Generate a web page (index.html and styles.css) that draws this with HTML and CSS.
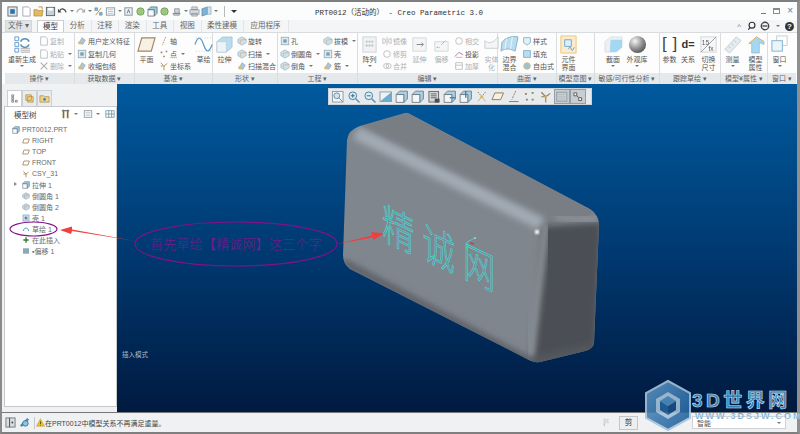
FILE: index.html
```html
<!DOCTYPE html>
<html lang="zh-CN">
<head>
    <meta charset="UTF-8">
    <title>PRT0012 (活动的) - Creo Parametric 3.0</title>
    <link rel="stylesheet" href="styles.css">
</head>
<body>
<svg class="defs" width="0" height="0">
    <symbol id="plane" viewBox="0 0 20 20"><path d="M5 3h14l-4 14H1z" fill="#f4efe0" stroke="#8a6a3a" stroke-width="1.2"/></symbol>
    <symbol id="csys" viewBox="0 0 12 12"><path d="M6 6 2 2M6 6l4-3M6 6v5M2 6h3" stroke="#8a6a3a" fill="none"/><circle cx="6" cy="6" r="1.2" fill="#c9a040"/></symbol>
    <symbol id="block" viewBox="0 0 20 20"><path d="M2 7 8 2h10v11l-6 5H2z" fill="#a8d4ee" stroke="#7aa0b8" stroke-width=".6"/><path d="M2 7h10v11H2z" fill="#e8f2f8" stroke="#9db4c2" stroke-width=".6"/></symbol>
    <symbol id="round" viewBox="0 0 12 12"><path d="M1 4 6 1l5 3v4l-5 3-5-3z" fill="#bcdcec" stroke="#6f98ad" stroke-width=".7"/><path d="M4 9V5l7-1" stroke="#e8864a" fill="none" stroke-width=".8"/></symbol>
    <symbol id="shell" viewBox="0 0 12 12"><rect x="1.5" y="1.5" width="9" height="9" fill="#d5e6ef" stroke="#7c98a8"/><rect x="4" y="4" width="4" height="4" fill="#5d86a3"/></symbol>
    <symbol id="doc" viewBox="0 0 12 12"><path d="M2 1h6l2 2v8H2z" fill="#fff" stroke="#8d949a" stroke-width=".8"/></symbol>
    <symbol id="gear" viewBox="0 0 12 12"><path d="M2 9 6 2l4 3-3 5z" fill="#8fbcd6" stroke="#5c7f96" stroke-width=".6"/><circle cx="3.5" cy="8" r="2" fill="#e3a63f"/></symbol>
    <symbol id="tool" viewBox="0 0 12 12"><rect x="1.5" y="2" width="9" height="8" fill="none" stroke="#8c9aa3"/><path d="M3 6h6M3 4h6M3 8h6" stroke="#aab4ba" stroke-width=".8"/></symbol>
    <symbol id="cube" viewBox="0 0 12 12"><path d="M1 4h7v7H1z" fill="#f6fafc" stroke="#5d6a72" stroke-width=".8"/><path d="M1 4l3-3h7v7l-3 3V4z" fill="#9ccbe6" stroke="#5d6a72" stroke-width=".8"/></symbol>
</svg>

<div class="app">
    <div class="titlebar">
        <div class="quick">
            <svg class="qa qa-first" viewBox="0 0 12 12"><rect x="1" y="1" width="10" height="10" fill="#dfe6ea" stroke="#5f6f7a"/><rect x="3.5" y="3.5" width="5" height="5" fill="#2f6fb0"/></svg>
            <svg class="qa" viewBox="0 0 12 12"><use href="#doc"/></svg>
            <svg class="qa" viewBox="0 0 12 12"><path d="M1 4h4l1 1h5l-1 6H1z" fill="#e6b85c" stroke="#9a7a30" stroke-width=".6"/><path d="M6 1h4v3" stroke="#d08a2a" fill="none"/></svg>
            <svg class="qa" viewBox="0 0 12 12"><rect x="1.5" y="1.5" width="9" height="9" fill="#c9d0d6" stroke="#56626b"/><rect x="3.5" y="2" width="5" height="3" fill="#fff"/></svg>
            <svg class="qa" viewBox="0 0 12 12"><path d="M3 5c2-3 6-2 7 2" stroke="#444" fill="none" stroke-width="1.3"/><path d="M1 3v4h4z" fill="#444"/></svg>
            <span class="caret"></span>
            <svg class="qa" viewBox="0 0 12 12"><path d="M9 5C7 2 3 3 2 7" stroke="#aaa" fill="none" stroke-width="1.3"/><path d="M11 3v4H7z" fill="#aaa"/></svg>
            <span class="caret"></span>
            <svg class="qa" viewBox="0 0 12 12"><path d="M2 2h3v3H2zM7 7h3v3H7z" fill="#7fb2d6" stroke="#4d7a9a" stroke-width=".5"/><path d="M9 2 3 10" stroke="#c8962f"/></svg>
            <svg class="qa" viewBox="0 0 12 12"><use href="#tool"/></svg>
            <span class="caret"></span>
            <svg class="qa" viewBox="0 0 12 12"><rect x="2" y="2" width="8" height="8" fill="#eef3f6" stroke="#7e8c95"/><path d="M4.5 8 6 4l1.500 4" stroke="#39414a" fill="none" stroke-width=".7"/></svg>
            <svg class="qa" viewBox="0 0 12 12"><circle cx="6" cy="6" r="4" fill="#9dc77f" stroke="#7aa05f"/></svg>
            <svg class="qa" viewBox="0 0 12 12"><use href="#cube"/></svg>
            <svg class="qa" viewBox="0 0 12 12"><circle cx="6" cy="6" r="4" fill="#9dc77f" stroke="#7aa05f"/></svg>
            <svg class="qa" viewBox="0 0 12 12"><path d="M2 8h8l-1 2H3zM4 3h5v5H4z" fill="#cfd6da" stroke="#6f7a82" stroke-width=".7"/></svg>
            <span class="caret"></span>
            <svg class="qa" viewBox="0 0 12 12"><path d="M3 1h6v3H3zM1 4h10v5H1zM3 8h6v3H3z" fill="#d6dbdf" stroke="#6f7a82" stroke-width=".6"/></svg>
            <svg class="qa" viewBox="0 0 12 12"><path d="M1 3l6-2v8l-6 2z" fill="#7fb2d6" stroke="#4d7a9a" stroke-width=".6"/><path d="M7 1h4v8H7z" fill="#cfe3ef" stroke="#7d97a8" stroke-width=".6"/></svg>
            <span class="caret"></span>
            <span class="qa-sep"></span>
            <span class="caret caret-dark"></span>
        </div>
        <div class="title">PRT0012（活动的） - Creo Parametric 3.0</div>
        <div class="winbtns">
            <span class="winmin"></span>
            <span class="winmax"></span>
            <span class="winclose">×</span>
        </div>
    </div>

    <div class="tabs">
        <div class="tab tab-file">文件 ▾</div>
        <div class="tab tab-active">模型</div>
        <div class="tab">分析</div>
        <div class="tab">注释</div>
        <div class="tab">渲染</div>
        <div class="tab">工具</div>
        <div class="tab">视图</div>
        <div class="tab">柔性建模</div>
        <div class="tab tab-end">应用程序</div>
        <div class="helpers">
            <span class="chev">^</span>
            <svg class="hicon" viewBox="0 0 12 12"><circle cx="6" cy="5" r="3.500" fill="none" stroke="#333" stroke-width="1.400"/><path d="M3.500 8 1.500 10.500" stroke="#333" stroke-width="1.400"/></svg>
            <svg class="hicon" viewBox="0 0 12 12"><circle cx="6" cy="6" r="4.500" fill="none" stroke="#444" stroke-width="1.600"/><path d="M3 6h6" stroke="#444" stroke-width="1.600"/></svg>
            <span class="caret"></span>
            <span class="helpmark">?</span>
        </div>
    </div>

    <div class="ribbon">
        <div class="group g-ops">
            <div class="g-body">
                <div class="big big-regen">
                    <svg class="bigicon" viewBox="0 0 20 20"><path d="M2 2h4v4H2zM2 8h4v4H2zM2 14h4v4H2z" fill="#fff" stroke="#3c86c6"/><path d="M8 7c2-4 7-4 9 0M17 10c-2 4-7 4-9 0" stroke="#2c70aa" fill="none" stroke-width="1.500"/><path d="M8 16h10M8 18h10M8 14h10" stroke="#666" stroke-width=".7"/></svg>
                    <span>重新生成</span>
                    <span class="caret"></span>
                </div>
                <div class="col dim">
                    <div class="row"><svg viewBox="0 0 12 12"><use href="#doc"/></svg>复制</div>
                    <div class="row"><svg viewBox="0 0 12 12"><use href="#doc"/></svg>粘贴<span class="caret"></span></div>
                    <div class="row"><svg viewBox="0 0 12 12"><path d="M2 2l8 8M10 2l-8 8" stroke="#999" stroke-width="1.300"/></svg>删除<span class="caret"></span></div>
                </div>
            </div>
            <div class="g-label">操作 ▾</div>
        </div>

        <div class="group g-get">
            <div class="g-body">
                <div class="col">
                    <div class="row"><svg viewBox="0 0 12 12"><use href="#gear"/></svg>用户定义特征</div>
                    <div class="row"><svg viewBox="0 0 12 12"><use href="#shell"/></svg>复制几何</div>
                    <div class="row"><svg viewBox="0 0 12 12"><use href="#gear"/></svg>收缩包络</div>
                </div>
            </div>
            <div class="g-label">获取数据 ▾</div>
        </div>

        <div class="group g-datum">
            <div class="g-body">
                <div class="big"><svg class="bigicon" viewBox="0 0 20 20"><use href="#plane"/></svg><span>平面</span></div>
                <div class="col">
                    <div class="row"><svg viewBox="0 0 12 12"><path d="M8 1 4 11" stroke="#8a6a3a" stroke-dasharray="2 1.200"/></svg>轴</div>
                    <div class="row"><svg viewBox="0 0 12 12"><path d="M2 3h2v2H2zM8 2h2v2H8zM5 8h2v2H5z" fill="#8a6a3a"/></svg>点<span class="caret"></span></div>
                    <div class="row"><svg viewBox="0 0 12 12"><use href="#csys"/></svg>坐标系</div>
                </div>
                <div class="big"><svg class="bigicon" viewBox="0 0 20 20"><path d="M1 10c3-9 6-9 9 0s6 9 9 0" stroke="#2f7fc0" fill="none" stroke-width="1.300"/><path d="M2 3h16M2 17h16" stroke="#b9c4ca" stroke-dasharray="1 2"/></svg><span>草绘</span></div>
            </div>
            <div class="g-label">基准 ▾</div>
        </div>

        <div class="group g-shape">
            <div class="g-body">
                <div class="big"><svg class="bigicon" viewBox="0 0 20 20"><use href="#block"/></svg><span>拉伸</span></div>
                <div class="col">
                    <div class="row"><svg viewBox="0 0 12 12"><use href="#round"/></svg>旋转</div>
                    <div class="row"><svg viewBox="0 0 12 12"><use href="#round"/></svg>扫描<span class="caret"></span></div>
                    <div class="row"><svg viewBox="0 0 12 12"><use href="#gear"/></svg>扫描混合</div>
                </div>
            </div>
            <div class="g-label">形状 ▾</div>
        </div>

        <div class="group g-eng">
            <div class="g-body">
                <div class="col">
                    <div class="row"><svg viewBox="0 0 12 12"><use href="#shell"/></svg>孔</div>
                    <div class="row"><svg viewBox="0 0 12 12"><use href="#round"/></svg>倒圆角<span class="caret"></span></div>
                    <div class="row"><svg viewBox="0 0 12 12"><use href="#round"/></svg>倒角<span class="caret"></span></div>
                </div>
                <div class="col">
                    <div class="row"><svg viewBox="0 0 12 12"><use href="#round"/></svg>拔模<span class="caret"></span></div>
                    <div class="row"><svg viewBox="0 0 12 12"><use href="#shell"/></svg>壳</div>
                    <div class="row"><svg viewBox="0 0 12 12"><use href="#gear"/></svg>筋<span class="caret"></span></div>
                </div>
            </div>
            <div class="g-label">工程 ▾</div>
        </div>

        <div class="group g-edit">
            <div class="g-body">
                <div class="big">
                    <svg class="bigicon" viewBox="0 0 20 20"><rect x="3" y="2" width="14" height="16" fill="#eef0f1" stroke="#c4cacd"/><path d="M6 6h2v2H6zM9 6h2v2H9zM12 6h2v2h-2zM6 10h2v2H6zM9 10h2v2H9zM12 10h2v2h-2z" fill="#aab2b7"/></svg>
                    <span>阵列</span><span class="caret"></span>
                </div>
                <div class="col dim">
                    <div class="row"><svg viewBox="0 0 12 12"><path d="M6 1v10M1 3l3 1v4l-3 1zM11 3 8 4v4l3 1z" fill="none" stroke="#aaa"/></svg>镜像</div>
                    <div class="row"><svg viewBox="0 0 12 12"><circle cx="6" cy="6" r="4" fill="none" stroke="#aaa"/></svg>修剪</div>
                    <div class="row"><svg viewBox="0 0 12 12"><circle cx="5" cy="6" r="3" fill="none" stroke="#aaa"/><circle cx="8" cy="6" r="3" fill="none" stroke="#aaa"/></svg>合并</div>
                </div>
                <div class="big dim">
                    <svg class="bigicon" viewBox="0 0 20 20"><path d="M3 3h14v14H3z" fill="#f2f4f5" stroke="#c9ced1"/><path d="M7 10h7m-2-2 2 2-2 2" stroke="#666" fill="none"/></svg>
                    <span>延伸</span>
                </div>
                <div class="big dim">
                    <svg class="bigicon" viewBox="0 0 20 20"><path d="M3 7h14v10H3z" fill="#f2f4f5" stroke="#c9ced1"/><path d="M5 13h3m2-3 4-4" stroke="#777" stroke-dasharray="1.500 1"/></svg>
                    <span>偏移</span>
                </div>
                <div class="col">
                    <div class="row dim"><svg viewBox="0 0 12 12"><circle cx="6" cy="6" r="4" fill="none" stroke="#aaa"/></svg>相交</div>
                    <div class="row"><svg viewBox="0 0 12 12"><path d="M1 9 6 4l5 3" fill="none" stroke="#8b3f9e"/><path d="M2 10h8" stroke="#d2a12e"/></svg>投影</div>
                    <div class="row dim"><svg viewBox="0 0 12 12"><path d="M2 2h8v8H2zM2 5h8" fill="none" stroke="#aaa"/></svg>加厚</div>
                </div>
                <div class="big dim">
                    <svg class="bigicon" viewBox="0 0 20 20"><path d="M3 6c5 4 9 2 14-4v12H3z" fill="#f2f4f5" stroke="#bcc3c7"/></svg>
                    <span>实体<br>化</span>
                </div>
            </div>
            <div class="g-label">编辑 ▾</div>
        </div>

        <div class="group g-surf">
            <div class="g-body">
                <div class="big">
                    <svg class="bigicon" viewBox="0 0 20 20"><path d="M2 8C6 2 13 1 19 2l-3 15C10 14 5 14 1 17z" fill="#a9d5ee" stroke="#6d9cb8"/><path d="M7 4 5 15M13 2l-2 13" stroke="#eaf5fb"/></svg>
                    <span>边界<br>混合</span>
                </div>
                <div class="col">
                    <div class="row"><svg viewBox="0 0 12 12"><path d="M2 2h8v6L6 11 2 8z" fill="#dceef8" stroke="#5d96b8"/></svg>样式</div>
                    <div class="row"><svg viewBox="0 0 12 12"><rect x="2" y="2" width="8" height="8" fill="#a9d5ee" stroke="#5d96b8"/></svg>填充</div>
                    <div class="row"><svg viewBox="0 0 12 12"><circle cx="6" cy="6" r="4" fill="#7fb2d6" stroke="#e3a63f"/></svg>自由式</div>
                </div>
            </div>
            <div class="g-label">曲面 ▾</div>
        </div>

        <div class="group g-intent">
            <div class="g-body">
                <div class="big">
                    <svg class="bigicon" viewBox="0 0 20 20"><path d="M2 1h16v18H2z" fill="#fbe9c4" stroke="#e5b65a"/><path d="M6 5h7v7H6z" fill="#d7ecf8" stroke="#4d94c4"/><path d="M10 15c1-3 2-3 3 0s2 0 3-2" stroke="#2f7fc0" fill="none"/></svg>
                    <span>元件<br>界面</span>
                </div>
            </div>
            <div class="g-label">模型意图 ▾</div>
        </div>

        <div class="group g-sens">
            <div class="g-body">
                <div class="big big-wide">
                    <svg class="bigicon" viewBox="0 0 20 20"><path d="M1 7 7 2h12v11l-6 5H1z" fill="#e9eef1" stroke="#bcc8cf" stroke-width=".6"/><path d="M7 5h12v8l-6 5H6z" fill="#8fd0f0"/></svg>
                    <span>截面</span><span class="caret"></span>
                </div>
                <div class="big big-wide">
                    <svg class="bigicon" viewBox="0 0 20 20"><defs><radialGradient id="ball" cx=".35" cy=".3" r=".8"><stop offset="0" stop-color="#f4f4f4"/><stop offset=".6" stop-color="#6d6d6d"/><stop offset="1" stop-color="#222"/></radialGradient></defs><circle cx="10" cy="10" r="9" fill="url(#ball)"/></svg>
                    <span>外观库</span><span class="caret"></span>
                </div>
            </div>
            <div class="g-label">敏感/可行性分析 ▾</div>
        </div>

        <div class="group g-trace">
            <div class="g-body">
                <div class="big"><div class="brackets">[ ]</div><span>参数</span></div>
                <div class="big"><div class="dequals">d=</div><span>关系</span></div>
                <div class="big">
                    <svg class="bigicon" viewBox="0 0 20 20"><rect x="2" y="2" width="16" height="16" fill="#f4f6f7" stroke="#c6ccd0"/><text x="3" y="10" class="mini">15</text><text x="10" y="17" class="mini">fx</text><path d="M2 18 18 2" stroke="#555" stroke-width=".7"/></svg>
                    <span>切换<br>尺寸</span>
                </div>
            </div>
            <div class="g-label">跟踪草绘 ▾</div>
        </div>

        <div class="group g-props">
            <div class="g-body">
                <div class="big">
                    <svg class="bigicon" viewBox="0 0 20 20"><path d="M2 15 14 2l5 4L7 19z" fill="#dfe8ee" stroke="#b7c3ca"/><path d="M6 12l2 2M9 9l2 2M12 6l2 2" stroke="#9fadb6"/></svg>
                    <span>测量</span><span class="caret"></span>
                </div>
                <div class="big">
                    <svg class="bigicon" viewBox="0 0 20 20"><path d="M3 9 11 2l8 5v3l-5-2v11H6V9z" fill="#8fd0f0" stroke="#5e90ad" stroke-width=".6"/><path d="M3 9l8-7 8 5" stroke="#e3a63f" fill="none"/></svg>
                    <span>模型<br>属性</span>
                </div>
            </div>
            <div class="g-label">模型¥属性 ▾</div>
        </div>

        <div class="group g-win">
            <div class="g-body">
                <div class="big">
                    <svg class="bigicon" viewBox="0 0 20 20"><rect x="7" y="1" width="11" height="10" fill="#fff" stroke="#b9c3c9"/><rect x="2" y="6" width="11" height="11" fill="#eaf3f8" stroke="#5e9ec4"/></svg>
                    <span>窗口</span><span class="caret"></span>
                </div>
            </div>
            <div class="g-label">窗口 ▾</div>
        </div>
    </div>

    <div class="main">
        <div class="sidebar">
            <div class="side-tabs">
                <div class="side-tab side-tab-on"><svg viewBox="0 0 12 12"><path d="M3 2h2v2H3zM3 5h2v2H3zM3 8h2v2H3zM7 8h2v2H7z" fill="none" stroke="#555" stroke-width=".7"/></svg></div>
                <div class="side-tab"><svg viewBox="0 0 12 12"><path d="M2 2h6v6H2zM4 4h6v6H4z" fill="#f0d28a" stroke="#a8843a" stroke-width=".7"/></svg></div>
                <div class="side-tab"><svg viewBox="0 0 12 12"><path d="M1 3h4l1 1h5v6H1z" fill="#f0d28a" stroke="#a8843a" stroke-width=".7"/><circle cx="6" cy="7" r="1.500" fill="#3f86b8"/></svg></div>
            </div>
            <div class="tree-box">
                <div class="tree-head">
                    <span class="tree-title">模型树</span>
                    <svg viewBox="0 0 12 12"><path d="M3 1v10M8 1v10" stroke="#8a6a3a" stroke-width="2"/><path d="M1 2h9" stroke="#777" stroke-width="1.500"/></svg>
                    <span class="caret"></span>
                    <svg viewBox="0 0 12 12"><use href="#tool"/></svg>
                    <span class="caret"></span>
                    <svg viewBox="0 0 12 12"><path d="M1 2h10v8H1zM4.500 2v8M8 2v8M1 6h10" fill="none" stroke="#4f7f9c" stroke-width=".8"/></svg>
                </div>
                <ul class="tree">
                    <li class="root"><svg viewBox="0 0 12 12"><use href="#cube"/></svg>PRT0012.PRT</li>
                    <li><svg viewBox="0 0 12 12"><path d="M3 3h8L9 9H1z" fill="#fff" stroke="#8a6a3a"/></svg>RIGHT</li>
                    <li><svg viewBox="0 0 12 12"><path d="M3 3h8L9 9H1z" fill="#fff" stroke="#8a6a3a"/></svg>TOP</li>
                    <li><svg viewBox="0 0 12 12"><path d="M3 3h8L9 9H1z" fill="#fff" stroke="#8a6a3a"/></svg>FRONT</li>
                    <li><svg viewBox="0 0 12 12"><use href="#csys"/></svg>CSY_31</li>
                    <li class="expand"><svg viewBox="0 0 12 12"><use href="#cube"/></svg>拉伸 1</li>
                    <li><svg viewBox="0 0 12 12"><use href="#round"/></svg>倒圆角 1</li>
                    <li><svg viewBox="0 0 12 12"><use href="#round"/></svg>倒圆角 2</li>
                    <li><svg viewBox="0 0 12 12"><use href="#shell"/></svg>壳 1</li>
                    <li><svg viewBox="0 0 12 12"><path d="M2 9c1-6 7-6 8 0" fill="none" stroke="#2f7fc0" stroke-width="1.200"/></svg>草绘 1</li>
                    <li><svg viewBox="0 0 12 12"><path d="M6 2v8M2 6h8" stroke="#2f7a2f" stroke-width="2"/></svg>在此插入</li>
                    <li><svg viewBox="0 0 12 12"><path d="M3 2v8M6 2v8M9 2v8" stroke="#4f7f9c" stroke-width="2"/></svg>▪偏移 1</li>
                </ul>
            </div>
        </div>

        <div class="viewport">
            <div class="view-tools">
                <svg viewBox="0 0 14 14"><rect x="1.500" y="1.500" width="11" height="11" fill="#f5f7f8" stroke="#7f8f99"/><circle cx="6" cy="6" r="3" fill="#cfe6f3" stroke="#4c7f9f"/><path d="M8 8l4 4" stroke="#4c7f9f"/></svg>
                <svg viewBox="0 0 14 14"><circle cx="6" cy="6" r="4" fill="#d8eef9" stroke="#2d6f9a"/><path d="M4 6h4M6 4v4" stroke="#1d4f70"/><path d="M9 9l4 4" stroke="#4c7f9f" stroke-width="1.500"/></svg>
                <svg viewBox="0 0 14 14"><circle cx="6" cy="6" r="4" fill="#d8eef9" stroke="#2d6f9a"/><path d="M4 6h4" stroke="#1d4f70"/><path d="M9 9l4 4" stroke="#4c7f9f" stroke-width="1.500"/></svg>
                <svg viewBox="0 0 14 14"><rect x="1" y="2" width="12" height="10" fill="#f1f4f6" stroke="#7f8f99"/><path d="M1 12 13 2v10z" fill="#5aa0c8"/></svg>
                <svg viewBox="0 0 14 14"><use href="#cube"/></svg>
                <svg viewBox="0 0 14 14"><use href="#cube"/></svg>
                <svg viewBox="0 0 14 14"><rect x="2" y="1.500" width="10" height="11" fill="#d0d5d8" stroke="#555"/><path d="M4 4h6M4 6h6M4 8h6" stroke="#555"/><rect x="8" y="9" width="5" height="4" fill="#333"/></svg>
                <svg viewBox="0 0 14 14"><use href="#cube"/><path d="M7 8h6" stroke="#2c70aa" stroke-width="1.500"/></svg>
                <svg viewBox="0 0 14 14"><use href="#cube"/><path d="M7 1v7" stroke="#2c70aa" stroke-width="1.500"/></svg>
                <svg viewBox="0 0 14 14"><path d="M3 2l8 10M11 2 3 12" stroke="#8a6a3a" stroke-dasharray="1.500 1"/><circle cx="7" cy="7" r="1.500" fill="#e3a63f"/></svg>
                <svg viewBox="0 0 14 14"><path d="M4 3h9l-3 7H1z" fill="#f6f1e3" stroke="#8a6a3a"/></svg>
                <svg viewBox="0 0 14 14"><path d="M9 1 5 10" stroke="#8a6a3a" stroke-dasharray="2 1"/><path d="M2 12h10" stroke="#666"/></svg>
                <svg viewBox="0 0 14 14"><path d="M2 3h2v2H2zM9 2h2v2H9zM3 9h2v2H3zM9 9h2v2H9z" fill="#8a6a3a"/></svg>
                <svg viewBox="0 0 14 14"><use href="#csys"/></svg>
                <svg class="vt-on" viewBox="0 0 14 14"><use href="#tool"/></svg>
                <svg class="vt-on" viewBox="0 0 14 14"><path d="M3 3h3v3H3zM8 8h3v3H8z" fill="#fff" stroke="#444"/><path d="M6 6l2 2" stroke="#444"/></svg>
            </div>
            <div class="mode">插入模式</div>
        </div>
    </div>

    <div class="status">
        <div class="st-btn"><svg viewBox="0 0 12 12"><rect x="1" y="1" width="10" height="10" fill="#d8dde0" stroke="#6f7a82"/><path d="M5 1v10" stroke="#444"/><circle cx="8" cy="6" r="1" fill="#444"/></svg></div>
        <div class="st-btn"><svg viewBox="0 0 12 12"><path d="M1 9 9 1l2 2-8 8z" fill="#3f8fc8"/><circle cx="7" cy="7" r="3" fill="#8fc6e6" stroke="#3f6f90"/></svg></div>
        <span class="st-sep"></span>
        <svg class="warn" viewBox="0 0 12 12"><path d="M6 1 11.500 11H.5z" fill="#f0c020" stroke="#a88510" stroke-width=".5"/><path d="M6 4.500V8M6 9v1" stroke="#333"/></svg>
        <span class="st-msg">在PRT0012中模型关系不再满足重量。</span>
        <svg class="flag" viewBox="0 0 12 12"><path d="M3 1v10" stroke="#aaa"/><path d="M3 1h7L8 4l2 3H3z" fill="#d8dcdf"/></svg>
        <div class="st-cut">剪</div>
        <div class="st-select"><span class="st-value">智能</span><span class="caret"></span></div>
    </div>

    <svg class="canvas" viewBox="0 0 800 434">
        <defs>
            <clipPath id="boxclip"><path d="M408 113 590 209Q599 215 599 225L594 343Q593 349 585 351L540 362Q533 363 525 358L350 269Q343 264 343 255L347 140Q348 130 360 126L405 113Z"/></clipPath>
            <filter id="soft"><feGaussianBlur stdDeviation="3"/></filter>
            <filter id="softer"><feGaussianBlur stdDeviation="1.200"/></filter>
            <linearGradient id="hexfill" x1="0" y1="0" x2="1" y2="1"><stop offset="0" stop-color="#5f97c4"/><stop offset="1" stop-color="#1a5c98"/></linearGradient>
        </defs>
        <g clip-path="url(#boxclip)">
            <rect x="340" y="110" width="262" height="256" fill="#80868e"/>
            <path d="M360 126 408 113 597 213 548 226Z" fill="#797e85"/>
            <path d="M356 133 542 224" stroke="#a2aab4" stroke-width="13" filter="url(#soft)" fill="none"/>
            <path d="M542 226 602 222 596 352 530 366Z" fill="#4c5054" filter="url(#soft)"/>
            <path d="M546 224 530 360" stroke="#8f959c" stroke-width="7" filter="url(#soft)" fill="none"/>
            <path d="M555 217 599 221" stroke="#8a9097" stroke-width="8" filter="url(#soft)" fill="none"/>
            <path d="M343 262 530 361 592 347" stroke="#55595e" stroke-width="6" filter="url(#soft)" fill="none"/>
            <circle cx="537" cy="232" r="2.200" fill="#fff" filter="url(#softer)"/>
        </g>
        <text class="sketch" transform="matrix(.9 .42 0 1.200 382 238)">精诚网</text>
        <path d="M467 250V242L475 238" stroke="#3fdcdc" fill="none" stroke-width=".8"/>
        <path d="M470 243 474 244" stroke="#f03030" stroke-width="1.500"/>
        <circle cx="467" cy="249" r="1" fill="#30e060"/>
        <circle cx="475" cy="238" r=".8" fill="#bff"/>

        <path d="M135 241 72 231 71 234 60 230 72 226.500 72 229.500Z" class="red-arrow"/>
        <path d="M337 244 372 235.500 371.500 232 384 233.500 373.500 240 373 237.500Z" class="red-arrow"/>
        <ellipse cx="236" cy="244" rx="101" ry="22" class="ring"/>
        <ellipse cx="33.500" cy="229" rx="23.500" ry="7" class="ring"/>
        <text class="note" x="150" y="249">首先草绘【精诚网】这三个字</text>

        <g opacity=".9">
            <path d="M668 381 690 393V418L668 430 646 418V393Z" fill="url(#hexfill)" stroke="#a9c3da" stroke-width="2"/>
            <path d="M668 392 680 399V412L668 419 656 412V399Z" fill="#d4e3ef" opacity=".7"/>
            <path d="M668 396 676 401 668 406 660 401Z" fill="#4e8dc0"/>
            <path d="M660 401 668 406V415L660 410Z" fill="#23629c"/>
            <path d="M676 401 668 406V415L676 410Z" fill="#1a4f84"/>
        </g>
        <text class="wm-big" x="692" y="407">3D世界网</text>
        <text class="wm-small" x="695" y="418.500">WWW.3DSJW.COM</text>
    </svg>
</div>
</body>
</html>
```

FILE: styles.css
```css
* {
    margin: 0;
    padding: 0;
    box-sizing: border-box;
}

html, body {
    width: 800px;
    height: 434px;
    overflow: hidden;
}

body {
    font-family: "Liberation Sans", "Noto Sans CJK SC", sans-serif;
    font-size: 7px;
    color: #555;
    background: #eff1f3;
}

.defs {
    display: none;
}

.app {
    position: relative;
    width: 800px;
    height: 434px;
    display: flex;
    flex-direction: column;
    border-top: 2px solid #7f7f7f;
    border-left: 2px solid #8a8a8a;
    border-right: 3px solid #8f8f8f;
    border-bottom: 2px solid #7f7f7f;
    background: #eff1f3;
}

.caret {
    display: inline-block;
    width: 0;
    height: 0;
    margin-left: 3px;
    border-left: 2px solid transparent;
    border-right: 2px solid transparent;
    border-top: 2px solid #777;
}

.caret-dark {
    border-top-color: #333;
    border-left-width: 3px;
    border-right-width: 3px;
    border-top-width: 3px;
}

/* title row */
.titlebar {
    height: 18px;
    display: flex;
    align-items: center;
    background: #fbfcfc;
    position: relative;
}

.quick {
    display: flex;
    align-items: center;
    padding-left: 5px;
    width: 313px;
    flex: none;
}

.qa {
    width: 11px;
    height: 11px;
    margin-right: 1px;
    flex: none;
}

.qa + .caret {
    margin-left: 1px;
    margin-right: 1px;
}

.qa-first {
    margin-right: 3px;
}

.qa-sep {
    width: 1px;
    height: 11px;
    margin: 0 3px 0 5px;
    background: #b5b9bc;
}

.title {
    flex: 1;
    font-family: "Liberation Mono", "Noto Sans CJK SC", monospace;
    font-size: 7.5px;
    color: #333;
    padding-top: 1px;
    white-space: nowrap;
}

.winbtns {
    display: flex;
    align-items: center;
    gap: 7px;
    padding-right: 4px;
    color: #777;
}

.winmin {
    width: 5px;
    height: 1px;
    margin-top: 4px;
    background: #777;
}

.winmax {
    width: 7px;
    height: 6px;
    border: 1px solid #8a8a8a;
    border-top-width: 2px;
}

.winclose {
    font-size: 10px;
    line-height: 10px;
}

/* tabs */
.tabs {
    height: 12px;
    display: flex;
    align-items: stretch;
    background: #f4f5f6;
    padding-left: 3px;
    position: relative;
}

.tab {
    width: 27.5px;
    font-size: 7.5px;
    line-height: 12px;
    text-align: center;
    color: #666;
    border-right: 1px solid #e3e6e8;
    white-space: nowrap;
}

.tab-file {
    width: 27px;
    margin-right: 5px;
    background: #e1e4e7;
    border: 1px solid #d3d6d9;
    line-height: 10px;
}

.tab-active {
    width: 27px;
    background: #fff;
    border: 1px solid #c9cdd0;
    border-bottom: none;
    color: #333;
    line-height: 11px;
}

.tab:nth-child(8) {
    width: 42px;
}

.tab-end {
    width: 45px;
}

.helpers {
    margin-left: auto;
    display: flex;
    align-items: center;
    gap: 3px;
    padding-right: 3px;
}

.chev {
    font-size: 8px;
    color: #777;
    margin-right: 3px;
}

.hicon {
    width: 10px;
    height: 10px;
}

.helpmark {
    width: 9px;
    height: 9px;
    margin-left: 2px;
    border-radius: 50%;
    background: #333;
    color: #fff;
    font-size: 8px;
    font-weight: bold;
    line-height: 9px;
    text-align: center;
}

/* ribbon */
.ribbon {
    height: 52px;
    display: flex;
    padding-left: 3px;
    background: #fdfdfd;
    border-top: 1px solid #d8dcdf;
}

.ribbon svg {
    opacity: .8;
}

.group {
    display: flex;
    flex-direction: column;
    flex: none;
    border-right: 1px solid #dadde0;
}

.g-ops { width: 70px; }
.g-get { width: 60px; }
.g-datum { width: 78px; }
.g-shape { width: 65px; }
.g-eng { width: 80px; }
.g-edit { width: 140px; }
.g-surf { width: 59px; }
.g-intent { width: 38px; }
.g-sens { width: 65px; }
.g-trace { width: 61px; }
.g-props { width: 47px; }
.g-win { width: 28px; border-right: none; }

.g-body {
    height: 40px;
    display: flex;
    gap: 3px;
    padding: 1px 2px 0;
    justify-content: space-between;
}

.g-sens .g-body {
    justify-content: center;
    gap: 0;
    padding-right: 6px;
}

.g-label {
    height: 11px;
    font-size: 7px;
    line-height: 11px;
    text-align: center;
    color: #5f5f5f;
    background: #e6e9eb;
    white-space: nowrap;
    overflow: hidden;
}

.col {
    display: flex;
    flex-direction: column;
    justify-content: flex-start;
    padding-top: 1px;
    flex: none;
}

.row {
    height: 12.5px;
    display: flex;
    align-items: center;
    gap: 1px;
    white-space: nowrap;
}

.row svg {
    width: 10px;
    height: 10px;
    flex: none;
}

.dim {
    color: #acb0b3;
}

.big {
    display: flex;
    flex-direction: column;
    align-items: center;
    flex: none;
    text-align: center;
    line-height: 7.5px;
}

.big .caret {
    margin: 1px 0 0;
}

.big-regen {
    padding-left: 1px;
}

.big-wide {
    width: 24px;
}

.bigicon {
    width: 19px;
    height: 19px;
    margin: 1px 0 2px;
    flex: none;
}

.brackets {
    height: 22px;
    font-size: 17px;
    line-height: 20px;
    color: #444;
    word-spacing: 1px;
}

.dequals {
    height: 22px;
    font-size: 11px;
    font-weight: bold;
    line-height: 21px;
    color: #333;
}

.mini {
    font-size: 7px;
    fill: #333;
}

/* model tree and graphics window */
.main {
    flex: 1;
    display: flex;
    min-height: 0;
    border-bottom: 1px solid #777;
}

.sidebar {
    width: 115px;
    flex: none;
    display: flex;
    flex-direction: column;
    padding: 6px 0 5px 2px;
}

.side-tabs {
    height: 16px;
    display: flex;
    padding-left: 3px;
}

.side-tab {
    width: 15px;
    display: flex;
    align-items: center;
    justify-content: center;
    background: #e9ecee;
    border: 1px solid #ccd0d3;
    border-bottom: none;
}

.side-tab-on {
    background: #fff;
}

.side-tab svg {
    width: 11px;
    height: 11px;
}

.tree-box {
    flex: 1;
    background: #fff;
    border: 1px solid #c7cacc;
}

.tree-head {
    height: 14px;
    display: flex;
    align-items: center;
    padding: 0 1px 0 9px;
    background: #fff;
}

.tree-title {
    width: 42px;
    font-size: 7.5px;
    color: #444;
}

.tree-head svg {
    width: 10px;
    height: 10px;
    margin-left: 5px;
}

.tree {
    list-style: none;
    padding-top: 3px;
    color: #666b70;
}

.tree li {
    height: 11px;
    display: flex;
    align-items: center;
    gap: 2px;
    padding-left: 17px;
    font-size: 7px;
    white-space: nowrap;
}

.tree li svg {
    width: 8px;
    height: 8px;
    flex: none;
}

.tree .root {
    padding-left: 7px;
}

.tree .expand {
    position: relative;
}

.tree .expand::before {
    content: "";
    position: absolute;
    left: 9px;
    top: 3px;
    border-left: 3px solid #888;
    border-top: 2.500px solid transparent;
    border-bottom: 2.500px solid transparent;
}

.viewport {
    flex: 1;
    position: relative;
    display: flex;
    flex-direction: column;
    align-items: center;
    background: linear-gradient(to bottom, #005a9e, #003a72 50%, #001a40);
}

.view-tools {
    margin: 4px 0 0 6px;
    width: 264px;
    height: 17px;
    display: flex;
    align-items: center;
    gap: 2.500px;
    padding-left: 2px;
    background: #e8ebee;
    border: 1px solid #cfd4d8;
}

.view-tools svg {
    width: 13.500px;
    height: 13.500px;
    flex: none;
    opacity: .85;
}

.view-tools .vt-on {
    background: #c3c8cc;
    outline: 1px solid #8a9095;
}

.mode {
    position: absolute;
    left: 5px;
    top: 265px;
    font-size: 6.500px;
    color: #a9bac8;
}

/* status row */
.status {
    height: 19px;
    display: flex;
    align-items: center;
    padding-left: 3px;
    background: #eff1f3;
}

.st-btn {
    width: 11px;
    height: 12px;
    margin-right: 3px;
    display: flex;
    align-items: center;
}

.st-btn svg {
    width: 11px;
    height: 11px;
}

.st-sep {
    width: 1px;
    height: 12px;
    margin: 0 1px;
    background: #c6cacd;
}

.warn {
    width: 9px;
    height: 9px;
    flex: none;
}

.st-msg {
    width: 557px;
    flex: none;
    font-size: 7px;
    color: #444;
}

.flag {
    width: 9px;
    height: 9px;
    flex: none;
}

.st-cut {
    width: 19px;
    height: 14px;
    margin-left: 8px;
    background: #eceef0;
    border: 1px solid #c3c7ca;
    text-align: center;
    line-height: 12px;
    font-size: 7.500px;
    color: #333;
}

.st-select {
    width: 94px;
    height: 13px;
    margin-left: 54px;
    display: flex;
    align-items: center;
    justify-content: space-between;
    padding: 0 4px;
    background: #fff;
    border: 1px solid #cfd3d6;
}

.st-value {
    line-height: 8px;
    padding-top: 2px;
}

/* things drawn over the window: part, notes and the site mark */
.canvas {
    position: absolute;
    left: -2px;
    top: -2px;
    width: 800px;
    height: 434px;
    pointer-events: none;
}

.sketch {
    font-family: "Noto Sans CJK SC", sans-serif;
    font-size: 36px;
    font-weight: 300;
    letter-spacing: 9px;
    fill: none;
    stroke: #3fdcdc;
    stroke-width: .6;
}

.red-arrow {
    fill: #ef3f3f;
}

.ring {
    fill: none;
    stroke: #85108a;
    stroke-width: 1.200;
}

.note {
    font-family: "Noto Sans CJK SC", sans-serif;
    font-size: 13.200px;
    font-weight: 300;
    fill: #731a8f;
}

.wm-big {
    font-family: "Liberation Sans", "Noto Sans CJK SC", sans-serif;
    font-size: 19px;
    font-weight: bold;
    letter-spacing: 3.500px;
    fill: #2f7fb8;
    stroke: #d5e4f0;
    stroke-width: .6;
}

.wm-small {
    font-family: "Liberation Sans", sans-serif;
    font-size: 9px;
    font-weight: bold;
    letter-spacing: 2px;
    fill: #6ea6d0;
    stroke: #fff;
    stroke-width: .2;
}
```
